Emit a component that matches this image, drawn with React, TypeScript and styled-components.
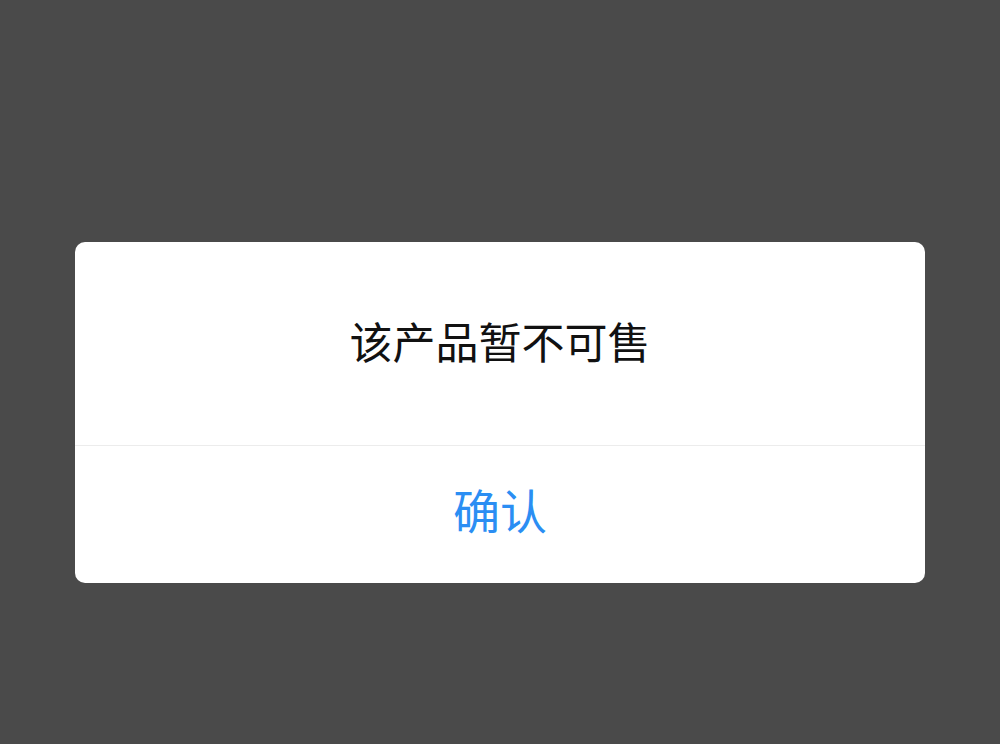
import React from 'react';
import styled, { createGlobalStyle } from 'styled-components';

const GlobalStyle = createGlobalStyle`
  html, body {
    margin: 0;
    padding: 0;
    height: 100%;
    background: #4a4a4a;
    font-family: "Noto Sans CJK SC", "Noto Sans", sans-serif;
  }
  #root {
    height: 100%;
  }
`;

const Overlay = styled.div`
  width: 100%;
  height: 744px;
  background: #4a4a4a;
  display: flex;
  justify-content: center;
  padding-top: 242px;
  box-sizing: border-box;
`;

const Dialog = styled.div`
  width: 850px;
  height: 341px;
  background: #ffffff;
  border-radius: 10px;
  display: flex;
  flex-direction: column;
  overflow: hidden;
`;

const Message = styled.div`
  height: 204px;
  box-sizing: border-box;
  padding-bottom: 8px;
  display: flex;
  align-items: center;
  justify-content: center;
  font-size: 43px;
  color: #111111;
  border-bottom: 1px solid #ececec;
`;

const ConfirmButton = styled.button`
  flex: 1;
  border: none;
  background: transparent;
  font-family: inherit;
  font-size: 47px;
  color: #2b8ef3;
  display: flex;
  align-items: center;
  justify-content: center;
  padding: 0 0 12px;
  cursor: pointer;
`;

const App: React.FC = () => (
  <>
    <GlobalStyle />
    <Overlay>
      <Dialog>
        <Message>该产品暂不可售</Message>
        <ConfirmButton>确认</ConfirmButton>
      </Dialog>
    </Overlay>
  </>
);

export default App;
